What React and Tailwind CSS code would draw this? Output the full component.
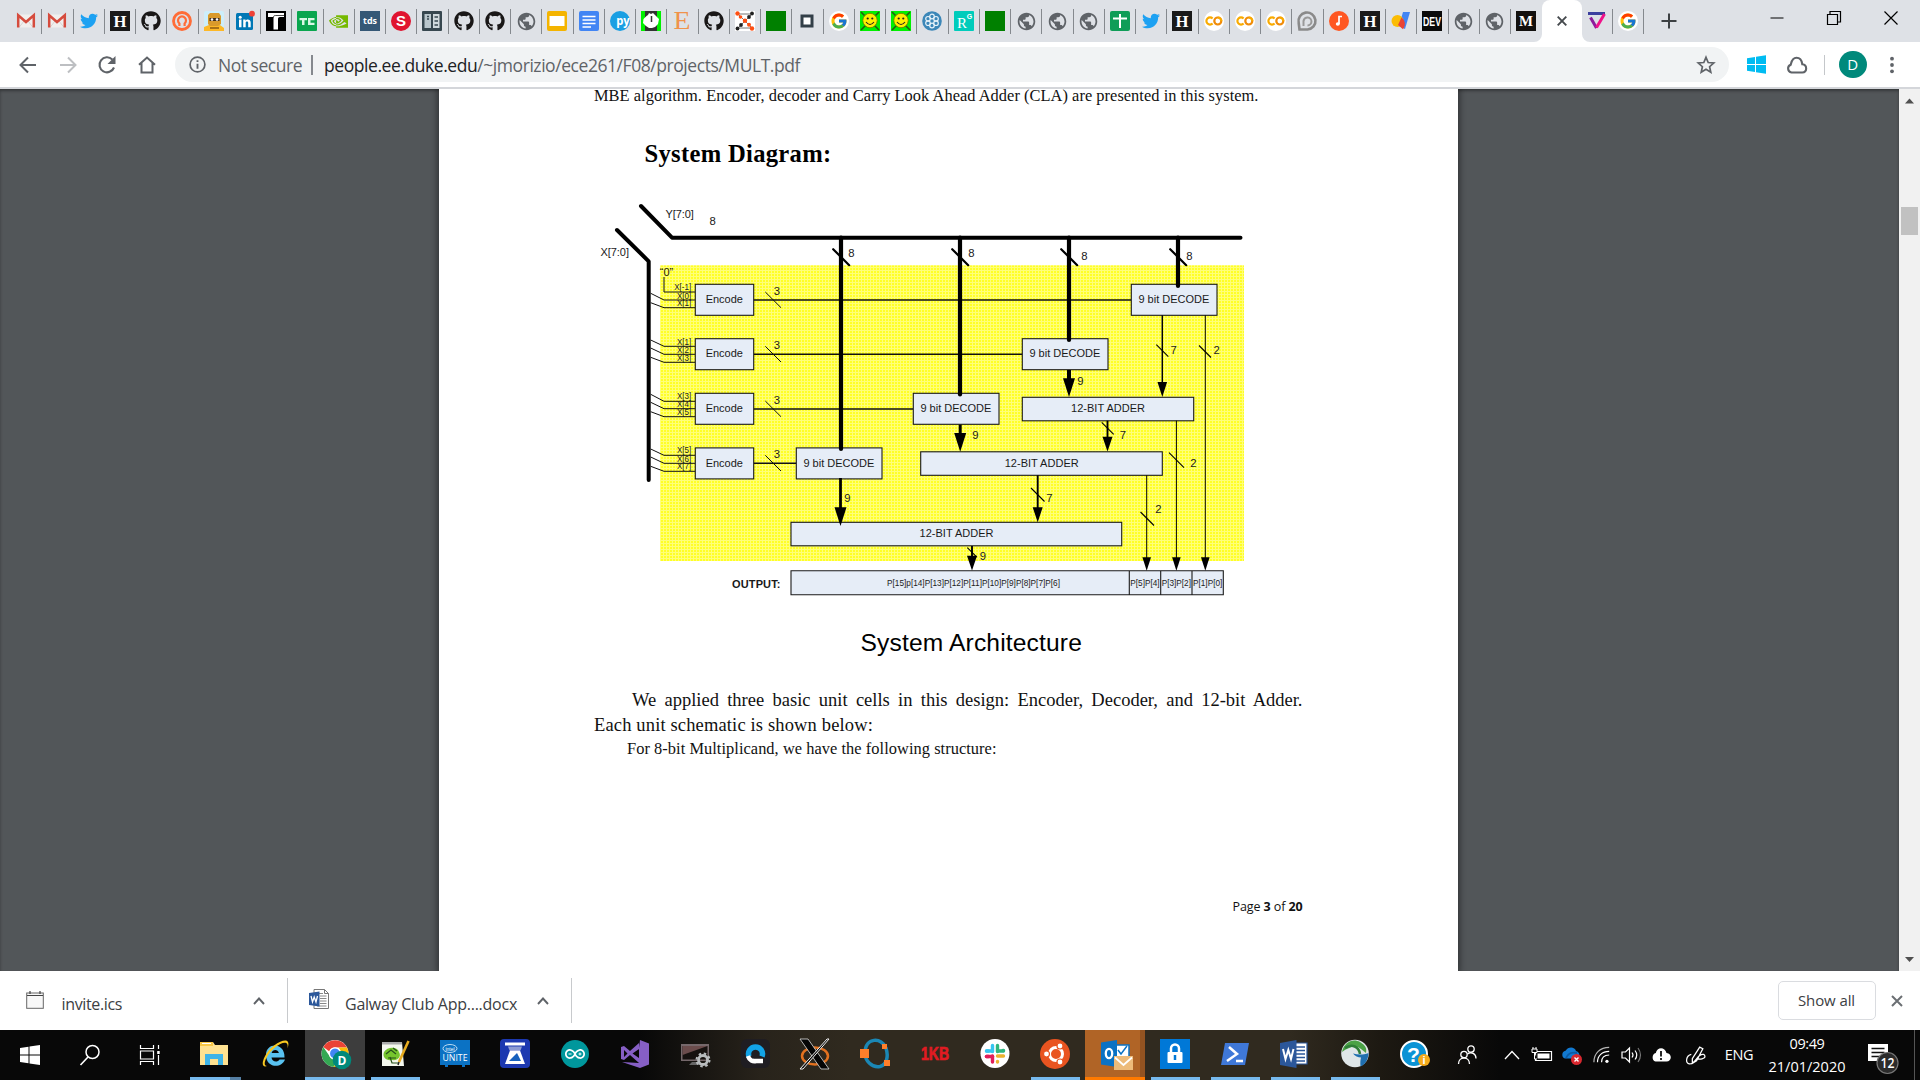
import React, { useLayoutEffect, useRef, useState } from "react";
import { FaTwitter, FaGithub } from "react-icons/fa";
import { MdPublic } from "react-icons/md";
import { FcGoogle } from "react-icons/fc";
import { SiNvidia, SiArduino } from "react-icons/si";

const UI = "font-['Open_Sans','Noto_Sans',sans-serif]";
const SERIF = "font-['Liberation_Serif',serif]";

/* Single-line text whose tracking (or word spacing) is adjusted to a set width. */
function Fit({ w, className = "", words = false, children }) {
  const ref = useRef(null);
  const [gap, setGap] = useState(0);
  useLayoutEffect(() => {
    const el = ref.current;
    const text = el.textContent;
    const n = words ? text.split(" ").length - 1 : text.length;
    setGap((w - el.getBoundingClientRect().width) / n);
  }, []);
  return (
    <span
      ref={ref}
      className={"inline-block whitespace-nowrap " + className}
      style={words ? { wordSpacing: gap } : { letterSpacing: gap }}
    >
      {children}
    </span>
  );
}

function Svg({ s = 20, v = 20, className = "", children }) {
  return (
    <svg width={s} height={s} viewBox={`0 0 ${v} ${v}`} className={"block shrink-0 overflow-visible " + className}>
      {children}
    </svg>
  );
}

function Letter({ x = 10, y = 15, size = 14, w, fill = "#fff", font = "Liberation Sans", weight = 700, children, ...p }) {
  return (
    <text x={x} y={y} fontSize={size} textAnchor="middle" fill={fill} fontFamily={font} fontWeight={weight}
      {...(w ? { textLength: w, lengthAdjust: "spacingAndGlyphs" } : {})} {...p}>
      {children}
    </text>
  );
}

const Gmail = () => (
  <Svg>
    <path d="M1 3.5h18v13H1z" fill="#f1efee" />
    <path d="M3 16.5 L8 10 M17 16.5 L12 10" stroke="#d8d5d4" />
    <path d="M2.2 16.5V4.2L10 11l7.8-6.8v12.3" fill="none" stroke="#d54b3d" strokeWidth="2.5" />
  </Svg>
);
const Twitter = () => <FaTwitter size={18} color="#1da1f2" className="shrink-0" />;
const Github = () => <FaGithub size={20} color="#191717" className="shrink-0" />;
const Globe = () => <MdPublic size={21} color="#5f6368" className="shrink-0" />;
const Hackaday = () => (
  <Svg><rect width="20" height="20" fill="#1a1a1a" /><Letter size={17} y={15.700} w={13} font="Liberation Serif">H</Letter></Svg>
);
const Google = () => (
  <span className="flex size-5 items-center justify-center rounded-full bg-white"><FcGoogle size={18} /></span>
);
const Orange = () => (
  <Svg>
    <circle cx="10" cy="10" r="8.500" fill="none" stroke="#ff6c37" strokeWidth="2.800" />
    <path d="M7.400 15V12.500a4 4 0 1 1 5.200 0V15" fill="none" stroke="#ff6c37" strokeWidth="2.200" />
  </Svg>
);
const Robot = () => (
  <Svg>
    <rect width="20" height="20" rx="2" fill="#cdeefa" />
    <path d="M0 20v-4l5-2h11l4 3v3z" fill="#fdb827" />
    <path d="M4 4l2-2h9l2 3v8l-3 2H6l-2-2z" fill="#d99a2b" />
    <path d="M5.500 7h10v3h-10z" fill="#3b2a1a" />
    <circle cx="8" cy="8.500" r="1.300" fill="#fff" /><circle cx="13" cy="8.500" r="1.300" fill="#fff" />
    <path d="M6 17h9" stroke="#8a5a14" strokeWidth="1.500" />
  </Svg>
);
const LinkedIn = () => (
  <Svg>
    <rect x="1" y="2" width="17" height="17" rx="1.500" fill="#0077b5" />
    <circle cx="5.200" cy="6.200" r="1.500" fill="#fff" />
    <path d="M4 8.600h2.500v7.600H4zM8.200 8.600h2.300v1.100c1.200-2 5.200-1.800 5.200 1.800v4.700h-2.500v-4.200c0-2-2.500-1.900-2.500 0v4.200H8.200z" fill="#fff" />
    <circle cx="17" cy="2.700" r="2.900" fill="#ef4136" />
  </Svg>
);
const TBlack = () => (
  <Svg><rect width="20" height="20" fill="#000" /><path d="M2 2h16v4h-4c-1.300 0-2 .7-2 2V18.500H7.500V6H2z" fill="#fff" /><path d="M7.500 6.500c0-1.500.5-2 2-2h8.500" stroke="#000" fill="none" strokeWidth=".7" /></Svg>
);
const TC = () => (
  <Svg><rect width="20" height="20" rx="1" fill="#0aa64f" /><path d="M2.500 7h7.500v2.300H7.500V14H5V9.300H2.500z M17.500 7H11v7h6.500v-2.300h-4V9.300h4z" fill="#d9f7e5" /></Svg>
);
const Nvidia = () => <SiNvidia size={19} color="#76b900" className="shrink-0" />;
const Tds = () => (
  <Svg><rect width="20" height="20" fill="#355876" /><Letter size={9} y={13} w={14} font="Open Sans">tds</Letter></Svg>
);
const SRed = () => (
  <Svg><circle cx="10" cy="10" r="10" fill="#e0132f" /><Letter size={15} y={15.4}>S</Letter></Svg>
);
const Building = () => (
  <Svg>
    <rect width="20" height="20" rx="1" fill="#37474f" />
    <path d="M2.500 3h6.500v14H2.500z" fill="#b9c6cc" /><path d="M11 3h6.500v14H11z" fill="#cfd8dc" />
    <path d="M5 5.500h2M5 8h2M12.500 6h3.500M12.500 10h3.500M12.500 14h3.500" stroke="#37474f" strokeWidth="1.600" />
  </Svg>
);
const Slides = () => (
  <Svg><rect width="20" height="20" rx="2" fill="#f4b400" /><rect x="2.500" y="5" width="15" height="10" fill="#fff" /></Svg>
);
const Docs = () => (
  <Svg><rect width="20" height="20" rx="2" fill="#4285f4" /><path d="M3.500 5.500h13M3.500 9h13M3.500 12.500h13M3.500 16h8.500" stroke="#fff" strokeWidth="1.500" /></Svg>
);
const Py = () => (
  <Svg><circle cx="10" cy="10" r="10" fill="#1a9fe3" /><Letter size={13} x={13} y={13.5} w={13.500} font="Open Sans">py</Letter></Svg>
);
const Fist = () => (
  <Svg>
    <rect width="20" height="20" fill="#00f000" /><rect x="4" width="12" height="20" fill="#333" />
    <path d="M2.500 8l3-3 1.500-1 1-2 2 1 2-1 2 2 1 1 3 3-1 5-3 3-3 1H8l-3-2-3-3z" fill="#fff" /><path d="M10.500 5v6" stroke="#333" strokeWidth="1.500" />
  </Svg>
);
const Etsy = () => <Svg><Letter size={25} y={18.300} w={17} fill="#f0924b" font="Liberation Serif" weight={400}>E</Letter></Svg>;
const Nodes = () => (
  <Svg>
    <rect width="20" height="20" fill="#fff" />
    <path d="M3 3h14L3 17h14L3 3" fill="none" stroke="#777" />
    <g fill="#222"><circle cx="17" cy="2.500" r="1.900" /><circle cx="2.500" cy="17.500" r="1.900" /><circle cx="14" cy="6" r="1.900" /><circle cx="6" cy="14" r="1.900" /></g>
    <g fill="#ff4f12"><circle cx="2.500" cy="2.500" r="2.200" /><circle cx="17" cy="17.500" r="2.200" /><circle cx="10" cy="9.800" r="2.200" /><circle cx="5.500" cy="6" r="1.800" /><circle cx="14" cy="13.800" r="2" /></g>
  </Svg>
);
const Green = () => <Svg><rect width="20" height="20" fill="#008000" /></Svg>;
const Square = () => <Svg><rect x="5" y="5" width="10" height="10" fill="#fff" stroke="#333f48" strokeWidth="3" /></Svg>;
const Smiley = () => (
  <Svg>
    <rect width="20" height="20" fill="#00f000" /><path d="M1 1l18 18M19 1L1 19" stroke="#245c10" strokeWidth="1.600" />
    <circle cx="10" cy="9.500" r="7.200" fill="#ffee00" stroke="#6d7a00" strokeWidth=".8" />
    <circle cx="7.700" cy="7.500" r="1.100" fill="#222" /><circle cx="12.300" cy="7.500" r="1.100" fill="#222" />
    <path d="M6 11q4 5 8 0" fill="none" stroke="#222" strokeWidth="1.100" />
  </Svg>
);
const Hex = () => (
  <Svg>
    <circle cx="10" cy="10" r="9.800" fill="#3c87b8" />
    <g fill="none" stroke="#e6f2f9" strokeWidth="1.200"><circle cx="10" cy="5.500" r="2.300" /><circle cx="10" cy="14.500" r="2.300" /><circle cx="6" cy="7.800" r="2.300" /><circle cx="14" cy="7.800" r="2.300" /><circle cx="6" cy="12.200" r="2.300" /><circle cx="14" cy="12.200" r="2.300" /></g>
  </Svg>
);
const RG = () => (
  <Svg><rect width="20" height="20" rx="1" fill="#00ccbb" /><Letter x={8} size={15.500} y={17} w={10} font="Liberation Serif" weight={400}>R</Letter><Letter x={15.500} y={8} size={7}>G</Letter></Svg>
);
const Sheet = () => (
  <Svg><rect width="20" height="20" rx="2" fill="#0f9d58" /><path d="M10 3v14M3 7.500h14" stroke="#fff" strokeWidth="2" /></Svg>
);
const Colab = () => (
  <Svg>
    <circle cx="10" cy="10" r="10" fill="#fff" />
    <path d="M8.600 7.500a3.600 3.600 0 1 0 0 5" fill="none" stroke="#f9ab00" strokeWidth="2.200" />
    <circle cx="13.800" cy="10" r="3.500" fill="none" stroke="#f08c0a" strokeWidth="2.200" />
    <path d="M13.800 6.500a3.500 3.500 0 0 1 3.500 3.500" fill="none" stroke="#f9ab00" strokeWidth="2.200" />
  </Svg>
);
const Swirl = () => (
  <Svg>
    <path d="M2.500 18.500h8A8.500 8.500 0 1 0 1.700 12z" fill="none" stroke="#8a8a8a" strokeWidth="2.600" />
    <path d="M6.500 15v-5a4 4 0 1 1 4 4.500" fill="none" stroke="#999" strokeWidth="2" />
  </Svg>
);
const Music = () => (
  <Svg><circle cx="10" cy="10" r="10" fill="#ff5722" /><ellipse cx="8.800" cy="13" rx="2" ry="1.700" fill="#fff" /><path d="M10 13V5.500h3" fill="none" stroke="#fff" strokeWidth="1.700" /></Svg>
);
const Studio = () => (
  <Svg>
    <path d="M12 1h7l-5 17-6-3z" fill="#4285f4" /><circle cx="6.500" cy="10" r="6" fill="#fbbc04" /><path d="M10.500 6.500a8 8 0 0 1 1.500 11.800L7 14z" fill="#ea4335" />
  </Svg>
);
const Dev = () => <Svg><rect width="20" height="20" fill="#0a0a0a" /><Letter size={13} y={14.600} w={18}>DEV</Letter></Svg>;
const Medium = () => <Svg><rect width="20" height="20" fill="#12100e" /><Letter size={15} y={15} w={14} font="Liberation Serif">M</Letter></Svg>;

const TABS = [
  Gmail, Gmail, Twitter, Hackaday, Github, Orange, Robot, LinkedIn, TBlack, TC, Nvidia, Tds, SRed, Building,
  Github, Github, Globe, Slides, Docs, Py, Fist, Etsy, Github, Nodes, Green, Square, Google, Smiley, Smiley,
  Hex, RG, Green, Globe, Globe, Globe, Sheet, Twitter, Hackaday, Colab, Colab, Colab, Swirl, Music, Hackaday,
  Studio, Dev, Globe, Globe, Medium,
];

function TabCell({ children, last }) {
  return (
    <div className="flex h-full w-[31.25px] shrink-0 items-center">
      <div className="flex flex-1 justify-center">{children}</div>
      <div className={last ? "w-px" : "h-[25px] w-px bg-[#85898e]"} />
    </div>
  );
}

function TabStrip() {
  return (
    <div className="flex h-[42px] bg-[#dee1e6] pl-[11px]">
      {TABS.map((Icon, i) => <TabCell key={i} last={i === TABS.length - 1}><Icon /></TabCell>)}
      <div className="flex shrink-0 items-end">
        <Svg s={8} v={8} className="-ml-2"><path d="M8 0v8H0a8 8 0 0 0 8-8z" fill="#fff" /></Svg>
        <div className="flex h-[42px] w-[39.500px] items-center justify-center rounded-t-lg bg-white pr-px">
          <Svg s={12} v={12}><path d="M1.700 1.700l8.600 8.600M10.300 1.700l-8.600 8.600" stroke="#45494d" strokeWidth="1.900" /></Svg>
        </div>
        <Svg s={8} v={8} className="-mr-2"><path d="M0 0v8h8a8 8 0 0 1-8-8z" fill="#fff" /></Svg>
      </div>
      <TabCell>
        <Svg><path d="M1 2.500h17" stroke="#3b3f9e" strokeWidth="3" /><path d="M3.500 6.500L9.500 17" stroke="#8c1b9c" strokeWidth="3" /><path d="M17.500 3L9.500 16.500" stroke="#f0128a" strokeWidth="3" /></Svg>
      </TabCell>
      <TabCell><Google /></TabCell>
      <div className="flex w-[50px] items-center justify-center">
        <Svg s={16} v={16}><path d="M8 .5v15M.5 8h15" stroke="#3c4043" strokeWidth="2" /></Svg>
      </div>
      <div className="ml-auto flex h-9 items-center gap-[43px] pr-[22px] text-black">
        <Svg s={14} v={14}><path d="M.5 7h13" stroke="currentColor" /></Svg>
        <Svg s={14} v={14}><path d="M.5 3.500h10v10H.5zM3 3.500V.5h10.500V11H10.500" fill="none" stroke="currentColor" strokeWidth="1.200" /></Svg>
        <Svg s={14} v={14}><path d="M.5.5l13 13M13.500.5l-13 13" stroke="currentColor" strokeWidth="1.200" /></Svg>
      </div>
    </div>
  );
}

function Toolbar() {
  return (
    <div className="flex h-[45px] items-center bg-white pl-[17.500px]">
      <div className="flex w-[157.500px] shrink-0 items-center gap-5 text-[#5f6368]">
        <Svg><path d="M18 10H3M10 2.500L2.500 10l7.500 7.500" fill="none" stroke="currentColor" strokeWidth="2" /></Svg>
        <Svg className="text-[#bdbfc2]"><path d="M2 10h15M10 2.500l7.500 7.500-7.500 7.500" fill="none" stroke="currentColor" strokeWidth="2" /></Svg>
        <Svg className="-ml-px"><path d="M17 12.500a7.500 7.500 0 1 1-1.700-8" fill="none" stroke="currentColor" strokeWidth="2.100" /><path d="M18.500 1v8h-8z" fill="currentColor" /></Svg>
        <Svg><path d="M2 9.800L10 2.500l8 7.300M4.500 8v9.500h11V8" fill="none" stroke="currentColor" strokeWidth="2" /></Svg>
      </div>
      <div className={"flex h-[35px] w-[1554px] shrink-0 items-center rounded-full bg-[#f1f3f4] pl-3.5 text-[17.500px] " + UI}>
        <Svg s={17}><circle cx="10" cy="10" r="8.700" fill="none" stroke="#5f6368" strokeWidth="2" /><path d="M10 9v6M10 5v2.200" stroke="#5f6368" strokeWidth="2.200" /></Svg>
        <div className="ml-[12px] w-[84px] pt-px text-[#5f6368]"><Fit w={84}>Not secure</Fit></div>
        <div className="ml-[9px] h-5 w-[1.500px] bg-[#85898e]" />
        <div className="ml-[11.500px] flex-1 pt-px text-[#5f6368]"><Fit w={476}><span className="text-[#202124]">people.ee.duke.edu</span>/~jmorizio/ece261/F08/projects/MULT.pdf</Fit></div>
        <Svg s={20} className="mr-[13px]"><path d="M10 2.300l2.200 5.200 5.600.5-4.200 3.700 1.200 5.500L10 14.300l-4.800 2.900 1.200-5.500L2.200 8l5.600-.5z" fill="none" stroke="#5f6368" strokeWidth="1.700" /></Svg>
      </div>
      <div className="flex items-center pl-[18px]">
        <Svg s={19} v={19}><path d="M0 3.200L8 2v7H0zM9 1.800L19 .3V9H9zM0 10h8v7l-8-1.200zM9 10h10v8.700L9 17.200z" fill="#00bcf2" /></Svg>
        <Svg s={22} v={22} className="ml-[19.500px]"><path d="M5.500 18.500a4 4 0 0 1-.8-7.700c.5-1 .8-7 5.800-7s5.500 4.500 5.800 6.500c5 .3 5.300 8.200 0 8.200z" fill="none" stroke="#5f6368" strokeWidth="2.100" /></Svg>
        <div className="ml-[16.500px] h-5 w-px bg-[#c4c7ca]" />
        <div className={"ml-[14px] flex size-[27.500px] items-center justify-center rounded-full bg-[#00897b] text-[15px] text-white " + UI}>D</div>
        <Svg s={20} className="ml-[15.500px]"><g fill="#5f6368"><circle cx="10" cy="3.700" r="1.900" /><circle cx="10" cy="10" r="1.900" /><circle cx="10" cy="16.300" r="1.900" /></g></Svg>
      </div>
    </div>
  );
}

/* ---------- diagram ---------- */
const ROWS = [
  { top: 284.300, line: 300, labels: [["X[-1]", 290], ["X[0]", 299.300], ["X[1]", 306]], taps: [null, [293.300, 300], [302.700, 307.700]] },
  { top: 338.700, line: 354.300, labels: [["X[1]", 345], ["X[2]", 353], ["X[3]", 361]], taps: [[340, 346.300], [348, 354.300], [357.300, 362.300]] },
  { top: 393.300, line: 409, labels: [["X[3]", 399], ["X[4]", 407], ["X[5]", 415]], taps: [[394.300, 401.300], [402.300, 408.700], [411.700, 416.700]] },
  { top: 447.900, line: 463.300, labels: [["X[5]", 453.300], ["X[6]", 462], ["X[7]", 469.300]], taps: [[449, 455.300], [457, 463.300], [466.300, 471.300]] },
];
const DECODERS = [
  { x: 1131.300, y: 284.300, bus: 1178, to: 286 },
  { x: 1022.300, y: 338.700, bus: 1069, to: 340 },
  { x: 913.300, y: 393.300, bus: 960, to: 394.500 },
  { x: 796.300, y: 447.900, bus: 841, to: 449 },
];
const ADDERS = [
  { x: 1022.300, y: 397.300, w: 171.400, cx: 1108, ty: 412 },
  { x: 920.700, y: 451.800, w: 241.600, cx: 1041.700, ty: 466.700 },
  { x: 791, y: 522.300, w: 330.700, cx: 956.500, ty: 536.700 },
];
const ARROWS = [
  { x: 1069, y: 370, h: 378.300, t: 397, hw: 6, s: 4 },
  { x: 960.200, y: 424.600, h: 433, t: 451.700, hw: 6, s: 3 },
  { x: 840.500, y: 478, h: 507.300, t: 526, hw: 6, s: 2.800 },
  { x: 1162.300, y: 315.300, h: 382, t: 397, hw: 4.800, s: 1.500, cut: [1156.300, 344.700, 12] },
  { x: 1205.300, y: 315.300, h: 557.300, t: 570.700, hw: 4.300, s: 1, cut: [1199, 345.500, 12] },
  { x: 1107.500, y: 420.700, h: 436.700, t: 451.500, hw: 5, s: 1.900, cut: [1101.700, 422.300, 12] },
  { x: 1176.400, y: 420.700, h: 557.300, t: 570.700, hw: 4.300, s: 1, cut: [1169, 452.700, 15] },
  { x: 1037.700, y: 475.300, h: 507.300, t: 522.300, hw: 5, s: 1.900, cut: [1031, 488, 13.500] },
  { x: 1146.700, y: 475.300, h: 557.300, t: 570.700, hw: 4.300, s: 1, cut: [1140.500, 512, 13.500] },
  { x: 972, y: 546, h: 555.700, t: 570.500, hw: 5, s: 1.900, cut: [967.300, 547.700, 9.500] },
];
const DIGITS = [
  ["8", 712.700, 224.900], ["8", 851.300, 256.900], ["8", 971.300, 257], ["8", 1084.300, 260], ["8", 1189.300, 260],
  ["3", 777, 295], ["3", 777, 349.200], ["3", 777, 404], ["3", 777, 458.200],
  ["9", 1080.300, 385], ["9", 975.300, 439], ["9", 847.500, 502], ["7", 1173.700, 354], ["2", 1216.700, 354],
  ["7", 1123, 439], ["2", 1193.300, 467], ["7", 1049.300, 502], ["2", 1158.300, 513], ["9", 983, 560],
];
const OUT = [
  ["P[15]p[14]P[13]P[12]P[11]P[10]P[9]P[8]P[7]P[6]", 887, 173],
  ["P[5]P[4]", 1130.300, 29.300], ["P[3]P[2]", 1161.700, 29.300], ["P[1]P[0]", 1193, 29.300],
];

function Diagram() {
  return (
    <svg width="665" height="405" viewBox="594 195 665 405" className="block shrink-0 font-['Liberation_Sans',sans-serif]">
      <defs>
        <pattern id="mesh" width="3" height="3" patternUnits="userSpaceOnUse">
          <rect width="3" height="3" fill="#ffff26" />
          <path d="M0 .5h3M.5 0v3" stroke="#ffff78" strokeWidth="1" />
        </pattern>
      </defs>
      <rect x="660" y="265.300" width="584" height="295.700" fill="url(#mesh)" />
      <g fill="none" stroke="#000" strokeLinecap="round" strokeLinejoin="round">
        <path d="M617 230l31.700 31.300V480" strokeWidth="4" />
        <path d="M641 206l31 31.700H1240.500" strokeWidth="4" />
      </g>
      {ROWS.map((r, i) => (
        <g key={i}>
          <g fill="none" stroke="#111" strokeWidth="1">
            {r.taps.map((t, k) => t ? <path key={k} d={`M650.700 ${t[0]}L664 ${t[1]}H695`} /> : <path key={k} d="M664 277V292H695" />)}
            <path d={`M753.700 ${r.line}H${DECODERS[i].x}`} strokeWidth="1.500" />
            <path d={`M765.300 ${r.line - 8}l15.700 15.700`} />
          </g>
          {r.labels.map(([t, y], k) => (
            <text key={k} x="691.200" y={y} fontSize="9" textAnchor="end" fill="#222" textLength={t.length > 4 ? 17 : 14.300} lengthAdjust="spacingAndGlyphs">{t}</text>
          ))}
          <rect x="695.300" y={r.top} width="58.400" height="31" fill="#e6edf7" stroke="#1a1a1a" strokeWidth="1.100" />
          <text x="724.300" y={r.top + 18.700} fontSize="11" textAnchor="middle" fill="#1a1a1a">Encode</text>
        </g>
      ))}
      {DECODERS.map((d, i) => (
        <g key={i}>
          <rect x={d.x} y={d.y} width="85.700" height="31" fill="#e6edf7" stroke="#1a1a1a" strokeWidth="1.100" />
          <text x={d.x + 42.600} y={d.y + 18.700} fontSize="11" textAnchor="middle" fill="#1a1a1a">9 bit DECODE</text>
          <path d={`M${d.bus} 237.500V${d.to}`} stroke="#000" strokeWidth="4.200" strokeLinecap="round" />
          <path d={`M${d.bus - 7.800} 249.200l16 16`} stroke="#000" strokeWidth="2.200" strokeLinecap="round" />
        </g>
      ))}
      {ADDERS.map((a, i) => (
        <g key={i}>
          <rect x={a.x} y={a.y} width={a.w} height="23.500" fill="#e6edf7" stroke="#1a1a1a" strokeWidth="1.100" />
          <text x={a.cx} y={a.ty} fontSize="11" textAnchor="middle" fill="#1a1a1a" textLength="74">12-BIT ADDER</text>
        </g>
      ))}
      <path d="M791 570.700h432.300v24H791zM1129.300 570.700v24M1160.700 570.700v24M1192 570.700v24" fill="#e6edf7" stroke="#1a1a1a" strokeWidth="1.100" />
      {OUT.map(([t, x, w]) => <text key={t} x={x} y="585.900" fontSize="9" fill="#222" textLength={w} lengthAdjust="spacingAndGlyphs">{t}</text>)}
      {ARROWS.map((a, i) => (
        <g key={i} stroke="#000">
          <path d={`M${a.x} ${a.y}V${a.h + 2}`} strokeWidth={a.s} />
          <path d={`M${a.x - a.hw} ${a.h}H${a.x + a.hw}L${a.x} ${a.t}z`} fill="#000" stroke="none" />
          {a.cut && <path d={`M${a.cut[0]} ${a.cut[1]}l${a.cut[2]} ${a.cut[2]}`} strokeWidth="1.100" />}
        </g>
      ))}
      {DIGITS.map(([t, x, y], i) => <text key={i} x={x} y={y} fontSize="11.300" textAnchor="middle" fill="#1a1a1a">{t}</text>)}
      <g fontSize="11" fill="#1a1a1a">
        <text x="665.500" y="217.500" textLength="28.300">Y[7:0]</text>
        <text x="600.500" y="256.200" textLength="28.500">X[7:0]</text>
        <text x="659.800" y="276">“0”</text>
        <text x="732" y="588.200" fontWeight="700" textLength="48.500">OUTPUT:</text>
      </g>
    </svg>
  );
}

function Viewer() {
  return (
    <div className="flex h-[882px] bg-[#525659]">
      <div className="flex flex-1 overflow-hidden pl-[439px] shadow-[inset_0_2px_3px_rgba(0,0,0,0.35)]">
        <div className={"flex h-[882px] w-[1019px] flex-col bg-white pl-[155px] text-[#111] shadow-[0_0_6px_2px_rgba(0,0,0,0.4)] " + SERIF}>
          <div className="-mt-[5px] h-6 text-[16.400px] leading-6"><Fit w={664.500}>MBE algorithm. Encoder, decoder and Carry Look Ahead Adder (CLA) are presented in this system.</Fit></div>
          <h1 className="mt-[30px] h-8 pl-[50.500px] text-[24.600px] font-bold leading-8 text-black"><Fit w={187}>System Diagram:</Fit></h1>
          <div className="mt-[25px]"><Diagram /></div>
          <div className="mt-[27px] h-8 pl-[266.500px] font-['Liberation_Sans',sans-serif] text-[24.600px] leading-8 text-black"><Fit w={221.500}>System Architecture</Fit></div>
          <div className="mt-[29px] h-[25px] pl-[38px] text-[18.500px] leading-[25px]"><Fit w={670.500} words>We applied three basic unit cells in this design: Encoder, Decoder, and 12-bit Adder.</Fit></div>
          <div className="h-6 text-[18.500px] leading-6"><Fit w={279}>Each unit schematic is shown below:</Fit></div>
          <div className="h-6 pl-[33px] text-[16.400px] leading-6"><Fit w={369.500}>For 8-bit Multiplicand, we have the following structure:</Fit></div>
          <div className={"mt-[136px] h-5 pl-[638.500px] text-[12.500px] leading-5 " + UI}><Fit w={70}>Page <b>3</b> of <b>20</b></Fit></div>
        </div>
      </div>
      <div className="flex w-[21px] flex-col items-center bg-[#f1f1f1]">
        <Svg s={9} v={9} className="mt-[7px]"><path d="M0 7.500L4.500 2.500 9 7.500z" fill="#505050" /></Svg>
        <div className="mt-[102px] h-7 w-[17px] bg-[#c1c1c1]" />
        <Svg s={9} v={9} className="mb-[7px] mt-auto"><path d="M0 2L4.500 7 9 2z" fill="#505050" /></Svg>
      </div>
    </div>
  );
}

const Caret = () => <Svg s={12} v={12} className="text-[#5f6368]"><path d="M1 9l5-5.500L11 9" fill="none" stroke="currentColor" strokeWidth="1.900" /></Svg>;

function Downloads() {
  return (
    <div className={"flex h-[59px] items-center bg-white text-[16px] text-[#3c4043] " + UI}>
      <div className="flex h-[45px] w-[288px] items-center border-r border-[#c8cacd] pl-[26px]">
        <Svg s={18} v={18} className="-mt-px"><rect x=".7" y="2" width="16.600" height="15.300" fill="#f8f8f8" stroke="#666" /><path d="M1 4.500h16M4 0v3M14 0v3" stroke="#444" strokeWidth="1.200" /></Svg>
        <div className="ml-[17.500px] w-[191.500px] pt-[7px]"><Fit w={60.500}>invite.ics</Fit></div>
        <Caret />
      </div>
      <div className="flex h-[45px] w-[284px] items-center border-r border-[#c8cacd] pl-[21px]">
        <Svg s={20} className="-mt-1"><path d="M5 .5h10.500l4 4v15H5z" fill="#fff" stroke="#777" /><path d="M15.500.5v4h4" fill="none" stroke="#777" /><path d="M11 7h6.500M11 9.500h6.500M11 12h6.500M11 14.500h6.500M8 17h9.500M8 4.500h6" stroke="#888" /><path d="M0 4l10.500-1.500v15L0 16z" fill="#2b579a" /><path d="M2 7l1.500 6L5.200 8 7 13l1.500-6" fill="none" stroke="#fff" strokeWidth="1.300" /></Svg>
        <div className="ml-[16px] w-[192px] pt-[7px]"><Fit w={172}>Galway Club App....docx</Fit></div>
        <Caret />
      </div>
      <div className="ml-auto flex h-[39px] w-[98px] items-center justify-center rounded-[5px] border border-[#dadce0] pr-px text-[15px]"><Fit w={57}>Show all</Fit></div>
      <Svg s={12} v={12} className="ml-[15px] mr-[17px]"><path d="M1 1l10 10M11 1L1 11" stroke="#6b6f73" strokeWidth="2" /></Svg>
    </div>
  );
}

/* ---------- taskbar icons, 30px grid ---------- */
const T = ({ children, s = 30 }) => <Svg s={s} v={30}>{children}</Svg>;
const APPS = [
  { line: "split", icon: <T><path d="M0 3h13l2 3h13v20H0z" fill="#ffe291" /><path d="M0 3h13v4H0z" fill="#f9c846" /><path d="M2 4.500h9" stroke="#fff" /><path d="M5 26V15h18v11h-5v-6h-8v6z" fill="#3fb4e8" /></T> },
  { icon: <T><path d="M24 18.500H11.500c.5 4.500 6 5.500 8 2h5.500c-3.500 9.500-19 8.500-19-4.500 0-13 19-13 18.500 2.500zM11.600 14h7.300c-.8-4-6.500-4-7.300 0z" fill="#59c2f0" /><path d="M7 27C-1 30 3 15 14 6.500 24-.5 31-.5 27.500 9.500 29 1 22 3 15 8.500 6 16 2 27 7 27z" fill="#f8c821" /></T> },
  { active: true, icon: <T><circle cx="15" cy="14.500" r="13.500" fill="#fff" /><path d="M3.300 8A13.500 13.500 0 0 1 27 8.500H15a6 6 0 0 0-5.500 4z" fill="#ea4335" /><path d="M3.300 8A13.500 13.500 0 0 0 13.500 28l4-8a6 6 0 0 1-8-3z" fill="#34a853" /><path d="M27 8.500A13.500 13.500 0 0 1 13.500 28l6-9.500c2-3 1.500-7-1-10z" fill="#fbbc05" /><circle cx="15" cy="14.500" r="5.600" fill="#4285f4" stroke="#fff" strokeWidth="1.300" /><circle cx="22" cy="21" r="9.300" fill="#00897b" /><Letter x={22} y={25.500} size={12} font="Open Sans">D</Letter></T> },
  { line: "full", icon: <T><path d="M2 3h20l2 24H2z" fill="#f4f7ee" /><path d="M2 3h20v2.500H2z" fill="#aaa" /><path d="M4 13c3-5 13-6 15 0 3 5-2 9-7 8-6 1-10-3-8-8z" fill="#76c52d" /><path d="M6 15l5-4 5 4M8 19h8M13 9l4 3M10 18l2 6h6" stroke="#26501a" strokeWidth="1.200" fill="none" /><path d="M28.500 2L19 23" stroke="#e7ab1f" strokeWidth="2.600" /><path d="M19 23l-1 3" stroke="#222" strokeWidth="1.500" /></T> },
  { icon: <T><path d="M0 1h30v25h-5v2h-3v-2H8v2H5v-2H0z" fill="#0b72c4" /><ellipse cx="10" cy="9.500" rx="7" ry="4" fill="none" stroke="#cfe6f7" strokeWidth=".9" /><Letter x={10} y={11.500} size={6} w={9} weight={400}>intel</Letter><Letter y={22} x={15} size={8.500} w={25} weight={400} font="Open Sans">UNITE</Letter></T> },
  { icon: <T><rect width="30" height="29" rx="4" fill="#1c38b0" /><path d="M5 3.500h20v3H5z" fill="#fff" /><path d="M8 7.500h14l-1.500 4h-11z" fill="#8d9bd4" /><path d="M10 11.500h10l5 13.500H5z" fill="#fff" /><path d="M17 14l4 8H9z" fill="#1660bd" /></T> },
  { icon: <span className="flex size-7 items-center justify-center rounded-full bg-[#00979c]"><SiArduino size={20} color="#fff" /></span> },
  { icon: <T><path d="M20 1l9 3.500v21L20 29 2 23l17 1V9z" fill="#865fc5" /><path d="M1 8l3-1 6 5 9-8v20l-9-8-6 5-3-1zM4 11v7l3.500-3.500zM12.500 14.500L19 19V10z" fill="#865fc5" fillRule="evenodd" /></T> },
  { icon: <T><rect x="1" y="5" width="28" height="17" fill="#75686b" /><path d="M2.500 7h25v13.500H2.500z" fill="#16110f" /><path d="M2.500 7h25L2.500 16z" fill="#6b4c4c" /><path d="M9 26h12l-3-3h-6z" fill="#666" /><circle cx="23" cy="21" r="4.500" fill="none" stroke="#b9bcbe" strokeWidth="2.800" /><circle cx="23" cy="21" r="6.500" fill="none" stroke="#b9bcbe" strokeWidth="2" strokeDasharray="2.500 2.600" /></T> },
  { icon: <T><rect x="1" y="0" width="29" height="29" rx="6" fill="#1f1d22" /><path d="M9 17.500a7 7 0 1 1 13 0" fill="none" stroke="#12a3e8" strokeWidth="5.500" /><path d="M8 17c1.500 4.500 5 5.800 8 5M13 22h10" fill="none" stroke="#fff" strokeWidth="4.500" /></T> },
  { icon: <T><ellipse cx="15" cy="17" rx="13" ry="8.500" fill="none" stroke="#e2711f" strokeWidth="2.500" /><path d="M0 0h8l21 30h-8z" fill="#050505" stroke="#ddd" strokeWidth=".8" /><path d="M27 0h2L3 30H0z" fill="#111" stroke="#eee" /></T> },
  { icon: <T><path d="M5 14C5-2 22-2 26 9c3 10 0 17-6 18.500C12 29 5 22 5 14z" fill="none" stroke="#1b87b5" strokeWidth="3.500" /><path d="M0 10h9v9H0zM22 5h5v5h-5zM24 21h6v6h-6z" fill="#ff7f2a" /></T> },
  { icon: <T><Letter x={15} y={21} size={18} w={28} fill="#e11b22" stroke="#e11b22" strokeWidth=".7">1KB</Letter></T> },
  { icon: <T><circle cx="15" cy="14.500" r="14.500" fill="#fff" /><g strokeLinecap="round" strokeWidth="3.400"><path d="M12.500 6.500v6M6.500 12h2" stroke="#36c5f0" /><path d="M17.500 12.500v-6M23 11.500h.5" stroke="#2eb67d" /><path d="M17.500 17h6M17.500 22.500v.5" stroke="#ecb22e" /><path d="M12.500 17v6M6.500 17.500h2" stroke="#e01e5a" /><path d="M6.500 12h6" stroke="#36c5f0" /><path d="M17.500 12h6" stroke="#2eb67d" /><path d="M6.500 17.500h6" stroke="#e01e5a" /></g></T> },
  { line: "full", icon: <T><circle cx="15" cy="15" r="15" fill="#e95420" /><circle cx="16" cy="15" r="6.500" fill="none" stroke="#fff" strokeWidth="3" /><g fill="#fff" stroke="#e95420" strokeWidth="1.200"><circle cx="6.500" cy="15" r="3" /><circle cx="20" cy="7" r="3" /><circle cx="20" cy="23" r="3" /></g></T> },
  { alert: true, icon: <Svg s={32} v={32} className="ml-1"><path d="M14 7h14v12H14z" fill="#fff" stroke="#0a72c4" strokeWidth="1.500" /><path d="M17 12l3 4 6-8" fill="none" stroke="#0a72c4" strokeWidth="1.500" /><path d="M0 4.500L16 2v27L0 26.500z" fill="#0a72c4" /><ellipse cx="8" cy="15.500" rx="3.200" ry="4.600" fill="none" stroke="#fff" strokeWidth="2.300" /><path d="M13 18h19v14H13z" fill="#edbb7a" /><path d="M14 19.500l8.500 7.500 8.500-7.500" fill="none" stroke="#fff" strokeWidth="1.800" /></Svg> },
  { line: "full", icon: <T><rect width="30" height="30" fill="#0078d7" /><rect x="7.500" y="13" width="15" height="11" rx="1" fill="#fff" /><path d="M11 13V9.500a4 4 0 0 1 8 0V13" fill="none" stroke="#fff" strokeWidth="2.500" /><path d="M15 16v5" stroke="#0078d7" strokeWidth="2.500" /></T> },
  { line: "full", icon: <T><path d="M5 4h24l-4 22H1z" fill="#3f78d8" /><path d="M9 8l8 7-10 7M16 22h7" fill="none" stroke="#fff" strokeWidth="2.500" /></T> },
  { line: "full", icon: <T><path d="M14 4h13v21H14z" fill="#fff" stroke="#2b579a" strokeWidth="1.200" /><path d="M16 8h9M16 11.500h9M16 15h9M16 18.500h9M16 22h9" stroke="#2b579a" strokeWidth="1.500" /><path d="M0 4L16.500 1v28L0 26z" fill="#2b579a" /><path d="M3 10l2.500 10L8.300 11 11 20l2.500-10" fill="none" stroke="#fff" strokeWidth="2" /></T> },
  { line: "full", icon: <T><circle cx="15" cy="14.500" r="13.800" fill="#dfe6e8" /><path d="M2 13C4 3 13-1 20 3c5 3 7 6 6 11l-5-4C16 6 9 8 2 13z" fill="#4ba246" /><path d="M5 9C12 4 19 8 20 15" stroke="#2f7d38" strokeWidth="2.500" fill="none" /><path d="M28.500 14c0 7-4 12-8 13.500-.5-4 0-7 .5-9-3 0-6-1.500-8-4 5 1.500 10 1.500 15.500-.5z" fill="#1f6fb0" /></T> },
  { icon: <T><circle cx="14" cy="15" r="13" fill="#0b93d5" stroke="#fff" strokeWidth="2" /><Letter x={13.500} y={22.500} size={21}>?</Letter><circle cx="24" cy="21" r="6" fill="#f7ac1c" /><Letter x={24} y={25} size={11}>i</Letter></T> },
];

function AppCell({ app }) {
  const bar = app.alert ? "h-[3px] w-[60px] bg-[#ff7a00]"
    : app.active ? "h-[3px] w-full bg-[#76b9ed]"
    : app.line === "full" ? "h-[3px] w-[49px] bg-[#76b9ed]" : "";
  const bg = app.alert ? "bg-[linear-gradient(90deg,#b06426_55px,#935321_55px)]" : app.active ? "bg-[#3d3d3d]" : "";
  return (
    <div className={"flex h-[50px] w-[60px] shrink-0 flex-col items-center " + bg}>
      <div className="flex h-[47px] items-center pt-[1px]">{app.icon}</div>
      {app.line === "split" ? (
        <div className="flex h-[3px] w-[51px] bg-[#76b9ed]"><div className="ml-auto w-[11px] bg-[#557fa3]" /></div>
      ) : <div className={bar} />}
    </div>
  );
}

const Tray = ({ w, children }) => <div className={"flex shrink-0 justify-center " + w}>{children}</div>;

function Taskbar() {
  return (
    <div className={"flex h-[50px] items-center bg-[linear-gradient(90deg,#080808_0,#080808_640px,#28231b_760px,#302a1f_850px,#302a1f_1290px,#1d1912_1380px,#080808_1500px)] text-white " + UI}>
      <Tray w="w-[60px]"><Svg><path d="M0 3l8.500-1.200V9.500H0zM9.500 1.600L20 0v9.500H9.500zM0 10.500h8.500v7.700L0 17zM9.500 10.500H20V20L9.500 18.400z" fill="#fff" /></Svg></Tray>
      <Tray w="w-[60px]"><Svg s={22} v={22}><circle cx="13.500" cy="8" r="6.500" fill="none" stroke="#fff" strokeWidth="1.500" /><path d="M9 13l-7.500 8" stroke="#fff" strokeWidth="1.600" /></Svg></Tray>
      <Tray w="w-[65px] pr-[5px]"><Svg><path d="M.5 0v3.500h13V0M.5 20v-3.500h13V20M.5 6h13v8H.5zM18.500 0v4M18.500 10v10" fill="none" stroke="#fff" strokeWidth="1.200" /><path d="M17.200 6h2.500v3h-2.500z" fill="#fff" /></Svg></Tray>
      {APPS.map((a, i) => <AppCell key={i} app={a} />)}
      <Tray w="w-[44px]"><Svg><circle cx="7" cy="9.500" r="3.200" fill="none" stroke="#fff" strokeWidth="1.300" /><circle cx="14" cy="4" r="3.200" fill="none" stroke="#fff" strokeWidth="1.300" /><path d="M1.500 19c0-8 11-8 11 0M10.500 9c4-3 8.500 0 8.500 4.500" fill="none" stroke="#fff" strokeWidth="1.300" /></Svg></Tray>
      <Tray w="w-[46px]"><Svg s={16} v={16}><path d="M1 12l7-7.500L15 12" fill="none" stroke="#fff" strokeWidth="1.300" /></Svg></Tray>
      <Tray w="w-[14px]"><Svg><path d="M3.500 6.500h16v9h-16z" fill="none" stroke="#fff" strokeWidth="1.200" /><path d="M5.500 8.500h12v5h-12z" fill="#fff" /><path d="M0 4h5v3.500H0zM1 4V2M4 4V2M2.500 8v6H5" fill="#080808" stroke="#fff" /></Svg></Tray>
      <Tray w="w-[46px]"><Svg><path d="M3 13.500a4 4 0 0 1 .5-7.700C6 1 13 1.500 14 6c4 .5 5 7.500 1 7.500z" fill="#1279d0" /><path d="M4 13c2-5 7-6 11-5" stroke="#0a5ba5" fill="none" strokeWidth="2" /><circle cx="14.500" cy="14.500" r="5.500" fill="#d9282f" /><path d="M12.500 12.500l4 4M16.500 12.500l-4 4" stroke="#fff" strokeWidth="1.400" /></Svg></Tray>
      <Tray w="w-[14px]"><Svg s={18}><g fill="none" stroke="#fff" strokeWidth="1.300"><path d="M1 18C1 8 8 1.500 18 1.500" opacity=".7" /><path d="M5 18c0-7 5-12 13-12M9.500 18c0-5 3-8 8.500-8" /></g><circle cx="15.500" cy="17" r="1.800" fill="#fff" /></Svg></Tray>
      <Tray w="w-[44px]"><Svg><path d="M1 7h3.500l4-4v14l-4-4H1z" fill="none" stroke="#fff" strokeWidth="1.200" /><path d="M11 7.500q2 2.500 0 5M14 5.500q3.500 4.500 0 9" fill="none" stroke="#fff" strokeWidth="1.200" /><path d="M17 3q5 7 0 14" fill="none" stroke="#777" strokeWidth="1.200" /></Svg></Tray>
      <Tray w="w-[15px]"><Svg><path d="M4.500 16.500a4.500 4.500 0 0 1 .3-8.500C6 1.500 14 1.500 15.500 8c6 .5 5.500 8.500 0 8.500z" fill="#fff" /><path d="M10 6v5.500M10 13v2" stroke="#111" strokeWidth="1.800" /></Svg></Tray>
      <Tray w="w-[55px]"><Svg s={21}><path d="M7 13L14 2l3 1.500L11 15l-4 2.500zM6 9c-5 1-6 8-2 9s7-6 10-8 5-1 5 1-5 3-7 2" fill="none" stroke="#fff" strokeWidth="1.200" /></Svg></Tray>
      <Tray w="w-[32px] text-[14.500px]"><Fit w={28.500}>ENG</Fit></Tray>
      <div className="ml-[13px] flex w-[78px] shrink-0 flex-col items-center text-[14.500px] leading-[23px]">
        <Fit w={35}>09:49</Fit><Fit w={77}>21/01/2020</Fit>
      </div>
      <div className="ml-[21px] shrink-0 pt-1">
        <Svg s={32} v={32}><path d="M1 3h20v17h-6l-4 4v-4H1z" fill="#fff" /><path d="M4.500 7.500h13M4.500 11.500h13M4.500 15.500h8" stroke="#111" strokeWidth="1.400" /><circle cx="20.500" cy="22" r="10.500" fill="#2b2b2b" stroke="#777" strokeWidth="1.200" /><Letter x={20.500} y={27} size={13.500} w={14} font="Open Sans" weight={600}>12</Letter></Svg>
      </div>
      <div className="ml-auto mr-[5px] h-[50px] w-px bg-[#555]" />
    </div>
  );
}

export default function App() {
  return (
    <div className="flex h-[1080px] w-[1920px] flex-col overflow-hidden bg-white">
      <TabStrip />
      <Toolbar />
      <div className="h-[2px] bg-[#d4d6da]" />
      <Viewer />
      <Downloads />
      <Taskbar />
    </div>
  );
}
